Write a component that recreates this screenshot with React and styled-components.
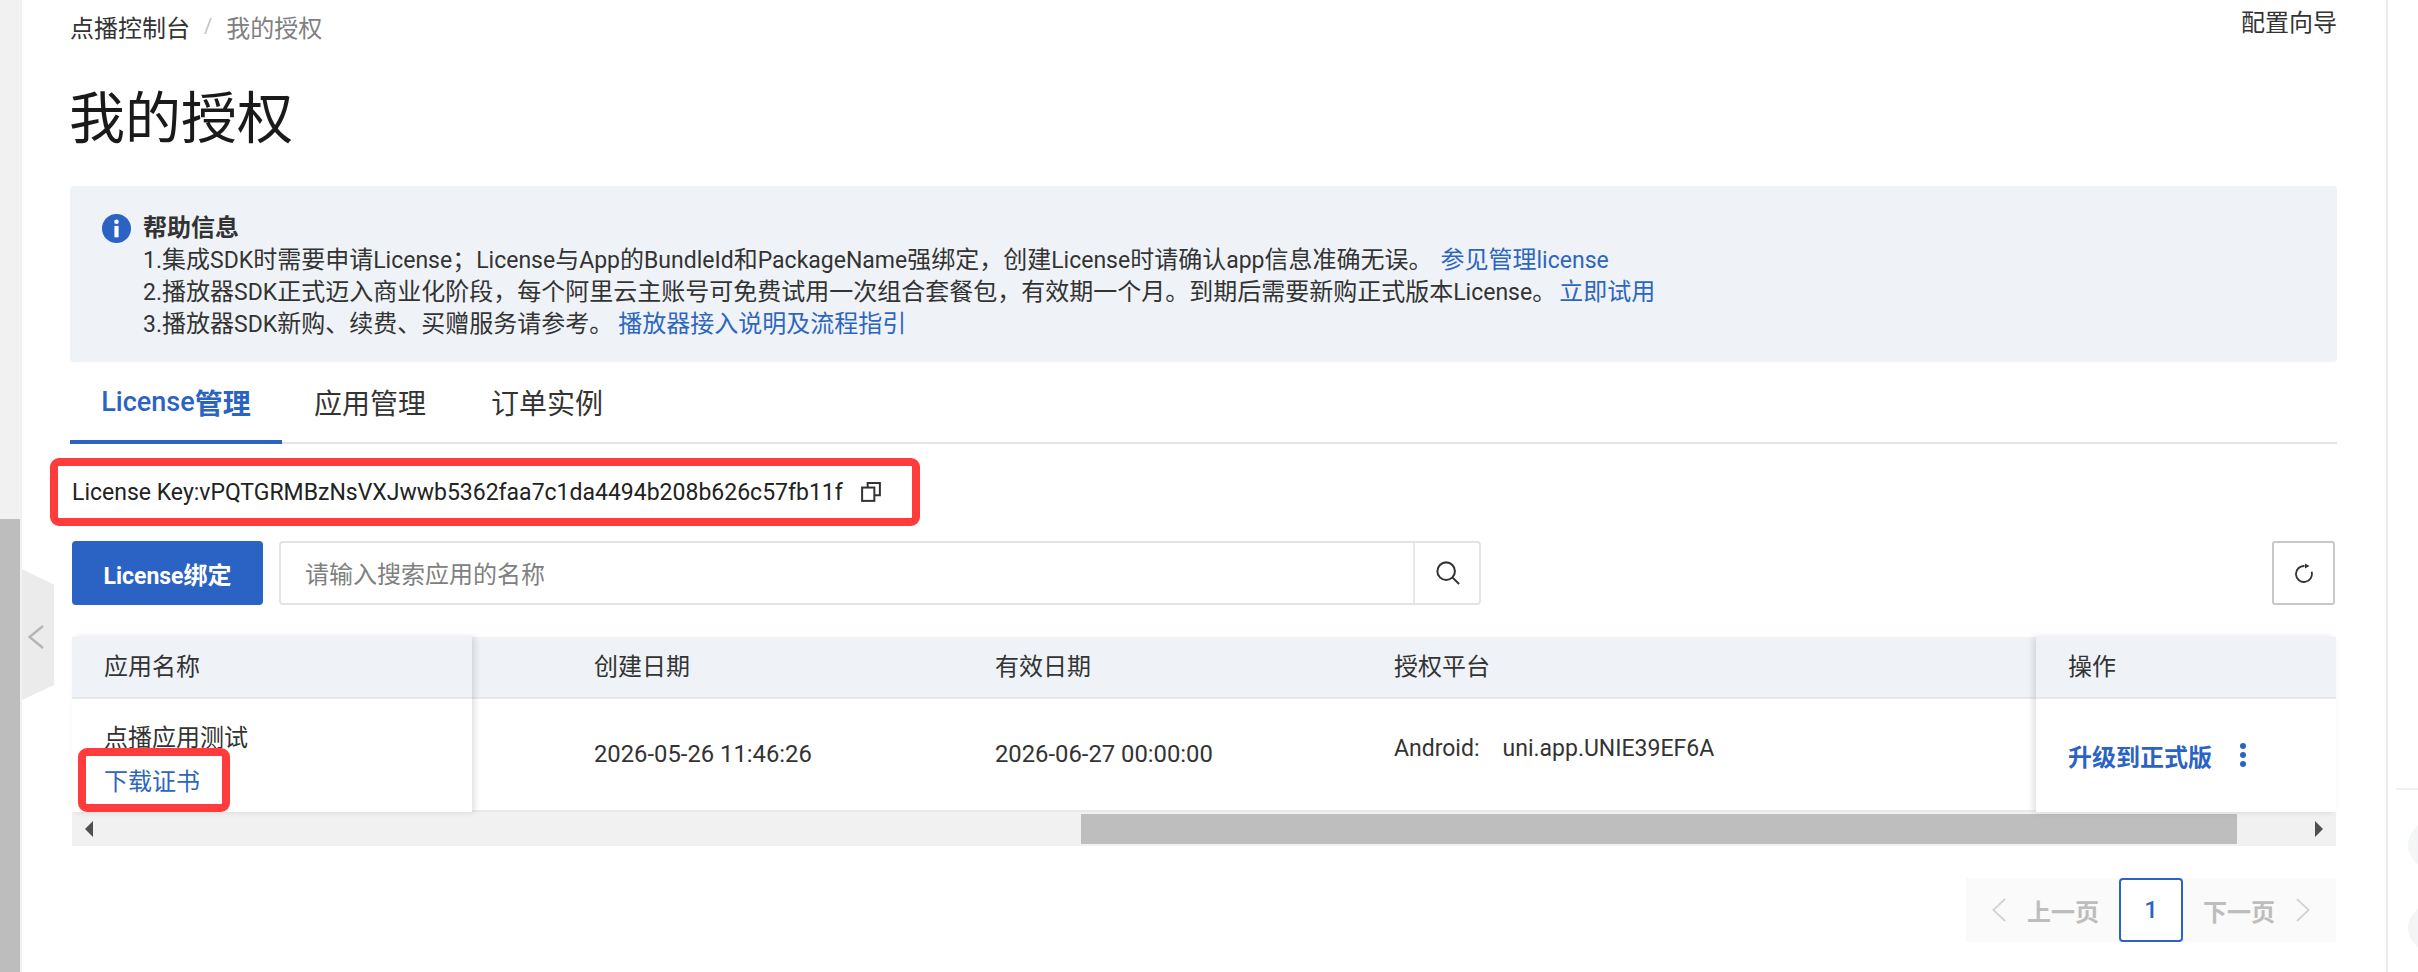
import React from "react";
import styled, { createGlobalStyle } from "styled-components";

const GlobalStyle = createGlobalStyle`
  * { box-sizing: border-box; }
  html, body { margin: 0; padding: 0; background: #fff; overflow: hidden; }
  body {
    font-family: Roboto, "Noto Sans CJK SC", sans-serif;
    font-size: 24px;
    color: #333;
  }
`;

const Page = styled.div`
  display: flex;
  width: 2418px;
  height: 972px;
  overflow: hidden;
`;

const Gutter = styled.div`
  position: relative;
  flex: 0 0 22px;
  background: #f1f1f1;
`;

const GutterThumb = styled.div`
  position: absolute;
  left: 0;
  top: 519px;
  bottom: 0;
  width: 20px;
  background: #bdbdbd;
`;

const CollapseTab = styled.div`
  position: absolute;
  left: 22px;
  top: 569px;
  width: 32px;
  height: 131px;
  padding: 4px 4px 0 0;
  background: #ebebeb;
  clip-path: polygon(0 0, 100% 12%, 100% 88.5%, 0 100%);
  display: flex;
  align-items: center;
  justify-content: center;
  color: #b5b5b5;
`;

const ChevronSvg = styled.svg`
  width: ${(p) => p.$size}px;
  height: 24px;
  fill: none;
  stroke: currentColor;
  stroke-width: ${(p) => p.$stroke || 2};
`;

const Chevron = ({ dir, size, stroke }) => (
  <ChevronSvg viewBox="0 0 16 24" $size={size} $stroke={stroke} preserveAspectRatio="none">
    <path d={dir === "left" ? "M15 1 1.5 12 15 23" : "M1 1 14.5 12 1 23"} />
  </ChevronSvg>
);

// latin text runs a little narrower than the CJK next to it
const Lt = styled.span`
  font-size: ${(p) => p.$size || 23}px;
  font-weight: ${(p) => p.$weight || "inherit"};
`;

const Main = styled.main`
  flex: 0 0 2315px;
  padding: 0 0 0 48px;
`;

const TopBar = styled.div`
  display: flex;
  justify-content: space-between;
  height: 48px;
`;

const Breadcrumb = styled.div`
  display: flex;
  align-items: center;
  gap: 14px;
  height: 52px;
  color: #808080;
`;

const CrumbLink = styled.span`
  color: #333;
`;

const CrumbSep = styled.span`
  color: #c0c0c0;
  font-size: 20px;
`;

const GuideLink = styled.span`
  color: #333;
  line-height: 46px;
`;

const Title = styled.h1`
  margin: 34px 0 0 -1px;
  font-size: 56px;
  font-weight: 400;
  line-height: 74px;
  color: #1a1a1a;
`;

const HelpBox = styled.div`
  display: flex;
  gap: 12px;
  height: 176px;
  margin-top: 30px;
  padding: 26px 32px;
  background: #eff3f8;
  border-radius: 4px;
`;

const InfoIcon = styled.svg`
  flex: none;
  width: 29px;
  height: 29px;
  margin-top: 2px;
`;

const HelpBody = styled.div`
  line-height: 32px;
`;

const HelpLine = styled.div`
  height: 32px;
`;

const HelpTitle = styled.div`
  font-weight: 700;
`;

const Link = styled.a`
  color: #2e66bd;
  margin-left: ${(p) => p.$gap || 0}px;
`;

const Tabs = styled.div`
  display: flex;
  height: 82px;
  border-bottom: 2px solid #e5e5e5;
`;

const Tab = styled.div`
  width: ${(p) => p.$width}px;
  height: 82px;
  padding-top: 2px;
  display: flex;
  align-items: center;
  justify-content: center;
  font-size: 28px;
  color: ${(p) => (p.$active ? "#2b63c4" : "#333")};
  font-weight: ${(p) => (p.$active ? 700 : 400)};
  border-bottom: 4px solid ${(p) => (p.$active ? "#2b63c4" : "transparent")};
`;

const Marked = styled.div`
  position: relative;
  &::after {
    content: "";
    position: absolute;
    inset: ${(p) => p.$inset};
    border: 8px solid #ff3b3b;
    border-radius: 9px;
    pointer-events: none;
  }
`;

const KeyRow = styled(Marked)`
  display: flex;
  align-items: center;
  gap: 18px;
  height: 68px;
  margin: 14px 0 15px;
  padding-left: 2px;
  width: 850px;
  color: #222;
  font-size: 23px;
`;

const DownloadMark = styled(Marked)`
  width: 96px;
`;

const Toolbar = styled.div`
  display: flex;
  align-items: stretch;
  height: 64px;
`;

const PrimaryButton = styled.button`
  width: 191px;
  margin-left: 2px;
  border: none;
  border-radius: 4px;
  background: #2b63c4;
  color: #fff;
  font: 700 24px Roboto, "Noto Sans CJK SC", sans-serif;
`;

const SearchBox = styled.div`
  display: flex;
  width: 1202px;
  margin-left: 16px;
  border: 2px solid #e3e3e3;
  border-radius: 4px;
`;

const SearchInput = styled.div`
  flex: 1;
  padding-left: 24px;
  line-height: 64px;
  color: #808080;
`;

const SearchAddon = styled.div`
  flex: 0 0 66px;
  display: flex;
  align-items: center;
  justify-content: center;
  padding-left: 2px;
  border-left: 2px solid #e8e8e8;
`;

const RefreshButton = styled.div`
  margin-left: auto;
  margin-right: 2px;
  width: 63px;
  display: flex;
  align-items: center;
  justify-content: center;
  border: 2px solid #c8c8c8;
  border-radius: 3px;
`;

const Table = styled.div`
  display: grid;
  grid-template-columns: 400px 1fr 300px;
  margin: 32px 1px 0 2px;
  height: 175px;
`;

const FixedColumn = styled.div`
  position: relative;
  z-index: 1;
  background: #fff;
  box-shadow: ${(p) => (p.$side === "left" ? "3px 0 6px" : "-3px 0 6px")} rgba(0, 0, 0, 0.12);
`;

const ScrollColumns = styled.div`
  display: grid;
  grid-template-columns: 401px 399px 1fr;
  padding-left: 90px;
  border-bottom: 2px solid #e8e8e8;
  background: linear-gradient(#eff3f8 60px, #e8e8e8 60px, #e8e8e8 62px, #fff 62px);
`;

const HeadCell = styled.div`
  height: 62px;
  padding-left: 32px;
  line-height: 60px;
  background: ${(p) => (p.$fill ? "#eff3f8" : "transparent")};
  border-bottom: 2px solid #e8e8e8;
`;

const BodyCell = styled.div`
  height: 111px;
  padding-left: 32px;
  line-height: 32px;
  font-size: ${(p) => p.$size || 23.8}px;
  display: flex;
  align-items: center;
  gap: 23px;
  padding-bottom: ${(p) => p.$lift || 2}px;
`;

const NameCell = styled.div`
  height: 112px;
  padding: 17px 0 0 32px;
  line-height: 44px;
`;

const ActionCell = styled.div`
  height: 112px;
  padding: 0 0 0 32px;
  display: flex;
  align-items: center;
  gap: 28px;
  color: #2b63c4;
  font-weight: 700;
`;

const Kebab = styled.span`
  display: flex;
  flex-direction: column;
  gap: 3px;
  i {
    width: 6px;
    height: 6px;
    border-radius: 50%;
    background: #2b63c4;
  }
`;

const Scrollbar = styled.div`
  display: flex;
  align-items: center;
  justify-content: space-between;
  position: relative;
  height: 34px;
  margin: 0 1px 0 2px;
  padding: 0 13px;
  background: #f1f1f1;
`;

const ScrollThumb = styled.div`
  position: absolute;
  left: 1009px;
  width: 1156px;
  top: 2px;
  height: 30px;
  background: #bebebe;
`;

const Arrow = styled.svg`
  width: 8px;
  height: 16px;
  fill: #505050;
`;

const Pager = styled.div`
  display: flex;
  align-items: center;
  width: 370px;
  height: 64px;
  margin: 32px 1px 0 auto;
  background: #fafafa;
  color: #bdbdbd;
  font-weight: 700;
`;

const PagerStep = styled.div`
  flex: 1;
  display: flex;
  align-items: center;
  justify-content: center;
  gap: 21px;
  &:first-child { padding-left: 6px; }
  &:last-child { padding-right: 6px; }
  svg { color: #d2d2d2; }
`;

const PageCurrent = styled.div`
  flex: 0 0 64px;
  height: 64px;
  display: flex;
  align-items: center;
  justify-content: center;
  border: 2px solid #2b63c4;
  border-radius: 4px;
  background: #fff;
  color: #2b63c4;
  font-weight: 500;
`;

const RightRail = styled.aside`
  position: relative;
  flex: 1;
  margin-left: 49px;
  border-left: 2px solid #ececec;
`;

const RailLine = styled.div`
  position: absolute;
  top: 788px;
  left: 8px;
  right: 0;
  height: 2px;
  background: #f0f0f0;
`;

const RailCircle = styled.div`
  position: absolute;
  left: 20px;
  top: ${(p) => p.$top}px;
  width: 46px;
  height: 46px;
  border-radius: 50%;
  background: #f4f5f7;
`;

export default function App() {
  return (
    <Page>
      <GlobalStyle />
      <Gutter>
        <GutterThumb />
        <CollapseTab>
          <Chevron dir="left" size={16} stroke={2.4} />
        </CollapseTab>
      </Gutter>
      <Main>
        <TopBar>
          <Breadcrumb>
            <CrumbLink>点播控制台</CrumbLink>
            <CrumbSep>/</CrumbSep>
            <span>我的授权</span>
          </Breadcrumb>
          <GuideLink>配置向导</GuideLink>
        </TopBar>
        <Title>我的授权</Title>
        <HelpBox>
          <InfoIcon viewBox="0 0 28 28">
            <circle cx="14" cy="14" r="14" fill="#2b63c4" />
            <circle cx="14" cy="7.5" r="2.2" fill="#fff" />
            <rect x="12" y="11.5" width="4" height="11" fill="#fff" />
          </InfoIcon>
          <HelpBody>
            <HelpTitle>帮助信息</HelpTitle>
            <HelpLine>
              <Lt>1.</Lt>集成<Lt>SDK</Lt>时需要申请<Lt>License</Lt>；<Lt>License</Lt>与<Lt>App</Lt>的<Lt>BundleId</Lt>和<Lt>PackageName</Lt>强绑定，创建<Lt>License</Lt>时请确认<Lt>app</Lt>信息准确无误。
              <Link $gap={8}>参见管理<Lt>license</Lt></Link>
            </HelpLine>
            <HelpLine>
              <Lt>2.</Lt>播放器<Lt>SDK</Lt>正式迈入商业化阶段，每个阿里云主账号可免费试用一次组合套餐包，有效期一个月。到期后需要新购正式版本<Lt>License</Lt>。
              <Link $gap={3}>立即试用</Link>
            </HelpLine>
            <HelpLine>
              <Lt>3.</Lt>播放器<Lt>SDK</Lt>新购、续费、买赠服务请参考。
              <Link $gap={5}>播放器接入说明及流程指引</Link>
            </HelpLine>
          </HelpBody>
        </HelpBox>
        <Tabs>
          <Tab $active $width={212}>
            <Lt $size={27} $weight={500}>License</Lt>管理
          </Tab>
          <Tab $width={176}>应用管理</Tab>
          <Tab $width={178}>订单实例</Tab>
        </Tabs>
        <KeyRow $inset="0 0 0 -20px">
          License Key:vPQTGRMBzNsVXJwwb5362faa7c1da4494b208b626c57fb11f
          <svg width="20" height="20" viewBox="0 0 18 18" fill="none" stroke="#333" strokeWidth="1.8">
            <rect x="1" y="5" width="11" height="12" />
            <path d="M6 5V1h11v11h-5" />
          </svg>
        </KeyRow>
        <Toolbar>
          <PrimaryButton>
            <Lt>License</Lt>绑定
          </PrimaryButton>
          <SearchBox>
            <SearchInput>请输入搜索应用的名称</SearchInput>
            <SearchAddon>
              <svg width="24" height="24" viewBox="0 0 26 26" fill="none" stroke="#333" strokeWidth="2.2">
                <circle cx="11" cy="11" r="9.5" />
                <path d="M18 18 25 25" />
              </svg>
            </SearchAddon>
          </SearchBox>
          <RefreshButton>
            <svg width="20" height="20" viewBox="0 1 20 20" fill="none" stroke="#333" strokeWidth="1.8">
              <path d="M17.6 9.7A8 8 0 1 1 10.5 4" />
              <path d="M11 1.5v5l4.5-2.5z" fill="#333" stroke="none" />
            </svg>
          </RefreshButton>
        </Toolbar>
        <Table>
          <FixedColumn $side="left">
            <HeadCell $fill>应用名称</HeadCell>
            <NameCell>
              <div>点播应用测试</div>
              <DownloadMark $inset="-12px -30px -8px -26px">
                <Link>下载证书</Link>
              </DownloadMark>
            </NameCell>
          </FixedColumn>
          <ScrollColumns>
            <div>
              <HeadCell>创建日期</HeadCell>
              <BodyCell>2026-05-26 11:46:26</BodyCell>
            </div>
            <div>
              <HeadCell>有效日期</HeadCell>
              <BodyCell>2026-06-27 00:00:00</BodyCell>
            </div>
            <div>
              <HeadCell>授权平台</HeadCell>
              <BodyCell $lift={12} $size={23}>
                <span>Android:</span>
                <span>uni.app.UNIE39EF6A</span>
              </BodyCell>
            </div>
          </ScrollColumns>
          <FixedColumn $side="right">
            <HeadCell $fill>操作</HeadCell>
            <ActionCell>
              升级到正式版
              <Kebab>
                <i />
                <i />
                <i />
              </Kebab>
            </ActionCell>
          </FixedColumn>
        </Table>
        <Scrollbar>
          <ScrollThumb />
          <Arrow viewBox="0 0 8 16">
            <path d="M8 0v16L0 8z" />
          </Arrow>
          <Arrow viewBox="0 0 8 16">
            <path d="M0 0v16l8-8z" />
          </Arrow>
        </Scrollbar>
        <Pager>
          <PagerStep>
            <Chevron dir="left" size={14} />
            上一页
          </PagerStep>
          <PageCurrent>1</PageCurrent>
          <PagerStep>
            下一页
            <Chevron dir="right" size={14} />
          </PagerStep>
        </Pager>
      </Main>
      <RightRail>
        <RailLine />
        <RailCircle $top={822} />
        <RailCircle $top={905} />
      </RightRail>
    </Page>
  );
}
